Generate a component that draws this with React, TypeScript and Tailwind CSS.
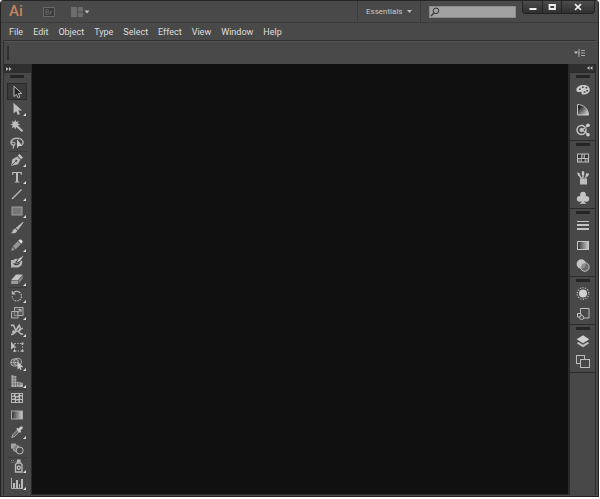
import type { ReactNode } from 'react'

interface Tool {
  name: string
  icon: ReactNode
  flyout?: boolean
  divider?: boolean
}

interface Panel {
  name: string
  icon: ReactNode
}

const MENUS = ['File', 'Edit', 'Object', 'Type', 'Select', 'Effect', 'View', 'Window', 'Help']

const TOOLS: Tool[] = [
  {
    name: 'Selection',
    icon: <path d="M4 1.200v10.300l2.500-2.200 1.700 3.600 1.800-.9-1.700-3.400h3.500z" fill="#222" stroke="#b8b8b8" />,
  },
  {
    name: 'Direct Selection',
    flyout: true,
    icon: <path d="M3.500.8v10.700l2.700-2.300 1.700 3.800 2.100-1-1.700-3.600h3.700z" fill="#bcbcbc" />,
  },
  {
    name: 'Magic Wand',
    icon: (
      <>
        <path d="M5.200.5l1 2.600 2.600-1.100-1.100 2.500 2.600 1-2.600 1 .9 2.300-2.400-.9-1 2.600-1-2.600-2.500 1.100 1.100-2.500-2.400-1 2.400-1-1-2.500 2.400 1.100z" fill="#bcbcbc" />
        <path d="M7.300 7.500l5.200 4.800" stroke="#bcbcbc" strokeWidth="2.200" />
      </>
    ),
  },
  {
    name: 'Lasso',
    icon: (
      <>
        <path d="M4.800 9.500C2.300 9.300 1 8 1 6.200 1 3.800 3.700 2.200 7 2.200s6 1.600 6 4c0 1-.4 1.900-1.200 2.500" fill="none" stroke="#b0b0b0" strokeWidth="1.500" />
        <path d="M1.500 7c1.200-1.500 3.800-.7 3.500.8-.2 1.200-1.800 1-1.500 2.200.2.900.2 1.600-.8 2.500" fill="none" stroke="#b0b0b0" strokeWidth="1.200" />
        <path d="M7 3.200v9l2-2.200h3.500z" fill="#c8c8c8" />
      </>
    ),
  },
  {
    name: 'Pen',
    flyout: true,
    divider: true,
    icon: (
      <>
        <path d="M1.200 12.800l1.200-6.500 4.800-2.800 3.300 3.300-2.800 4.800z" fill="#b8b8b8" />
        <path d="M7.800 2.700l1.600-1.600 3.500 3.500-1.600 1.600z" fill="#c8c8c8" />
        <path d="M2 12l4-4" stroke="#444" strokeWidth=".8" />
        <circle cx="6.300" cy="7.700" r="1" fill="#444" />
      </>
    ),
  },
  {
    name: 'Type',
    flyout: true,
    icon: <path d="M2.200 2h9.600v3h-.8c-.2-1.300-.6-1.900-2-1.900h-1v7.600c0 .7.300.9 1.500 1v.8h-5v-.8c1.200-.1 1.500-.3 1.500-1V3.100H5c-1.400 0-1.800.6-2 1.900h-.8z" fill="#bcbcbc" />,
  },
  {
    name: 'Line Segment',
    flyout: true,
    icon: <path d="M2 12l9.500-9.500" stroke="#bcbcbc" strokeWidth="1.200" />,
  },
  {
    name: 'Rectangle',
    flyout: true,
    icon: <rect x="2" y="3" width="10" height="8" fill="#777" stroke="#a0a0a0" />,
  },
  {
    name: 'Paintbrush',
    icon: (
      <>
        <path d="M13 .8l.5.6-5.500 7.600-2.200-1.900z" fill="#bcbcbc" />
        <path d="M5.200 7.600l2 1.800c-.5 2.500-3 3.300-6.500 2.700 2.300-.6 1.900-3.900 4.500-4.500z" fill="#bcbcbc" />
      </>
    ),
  },
  {
    name: 'Pencil',
    flyout: true,
    icon: (
      <>
        <path d="M1.200 12.800l1-3.700 2.700 2.700zM2.800 8.300l5-5 2.900 2.900-5 5z" fill="#989898" />
        <path d="M8.300 2.800l1-1c1.600-1.300 4.200 1.200 2.900 2.900l-1 1z" fill="#dedede" />
      </>
    ),
  },
  {
    name: 'Blob Brush',
    icon: (
      <>
        <path d="M1 5h2.500L5 3.800h3L5.800 6.500 5 8.800l4-.8 2.500-2.500 1 1-1 4-3.500 2H1z" fill="#b4b4b4" />
        <path d="M13.500.8L9 3.500 6.500 7.500l3.500-1.500z" fill="#c8c8c8" />
        <path d="M4 8c0 2.500 4 2 5.500 0" stroke="#3c3c3c" strokeWidth="1.200" fill="none" />
      </>
    ),
  },
  {
    name: 'Eraser',
    flyout: true,
    icon: (
      <>
        <path d="M1.200 8l4.800-5.500h6.800L8.200 8z" fill="#c2c2c2" />
        <path d="M1.200 8.500H8v3.500H1.200z" fill="#9c9c9c" />
        <path d="M8.500 8.300L12.800 3.300v3.500l-4.300 5z" fill="#808080" />
      </>
    ),
  },
  {
    name: 'Rotate',
    flyout: true,
    divider: true,
    icon: (
      <>
        <path d="M4 3.200a4.800 4.800 0 1 1-.7 7.400" fill="none" stroke="#bcbcbc" strokeWidth="1.200" strokeDasharray="7 1 1.500 1 1.500 1 1.500 1 1.500 1 1.500 1" />
        <path d="M1.800 1.500v4h4z" fill="#bcbcbc" />
        <path d="M2.300 7v1.300M2.800 9.300l.5.900" stroke="#bcbcbc" />
      </>
    ),
  },
  {
    name: 'Scale',
    flyout: true,
    icon: (
      <>
        <rect x="4.500" y="1.500" width="8.500" height="8" fill="#555" stroke="#aaa" />
        <path d="M1.500 5.500H8V12H1.500z" fill="#606060" fillOpacity=".5" stroke="#aaa" />
        <path d="M7.500 6.500l3-2.500M8.500 3.500h2.500v2.500" fill="none" stroke="#c4c4c4" />
      </>
    ),
  },
  {
    name: 'Width',
    flyout: true,
    icon: (
      <>
        <path d="M1 3c1.500-2 3-.5 3.500 1.500S6 7.500 7 5.500 9 2 10 1.500M1 11.500c3.500.7 4-3.500 6.500-3.500s1 4 5.500 3" fill="none" stroke="#b8b8b8" strokeWidth="1.500" />
        <path d="M2.500 10C5 9 8 4 9.500 3.500s.5 3-1 4.500c2.500 0 2-3 4.500-2.500" stroke="#b8b8b8" fill="none" strokeWidth="1.200" />
        <circle cx="3.500" cy="8.700" r="1.500" fill="#b8b8b8" />
      </>
    ),
  },
  {
    name: 'Free Transform',
    icon: (
      <>
        <path d="M1 1.500v8l2.200-1.800h3.300z" fill="#bcbcbc" />
        <path d="M4.500 3.500h8v7.500h-8z" fill="none" stroke="#aaa" strokeDasharray="1.500 1.200" />
        <path d="M11.500 2.500h2v2h-2zM11.500 10h2v2h-2zM3.500 10h2v2h-2z" fill="#bcbcbc" />
      </>
    ),
  },
  {
    name: 'Shape Builder',
    flyout: true,
    icon: (
      <>
        <ellipse cx="4.700" cy="5.500" rx="4" ry="3.800" fill="#666" stroke="#aaa" />
        <ellipse cx="7.700" cy="5" rx="3.800" ry="3.800" fill="none" stroke="#aaa" />
        <path d="M1 5.500h8" stroke="#b8b8b8" strokeDasharray="1 1" />
        <path d="M7.500 4.500v8l1.800-1.600 1 2.200 1.300-.6-1-2.200h2.700z" fill="#c8c8c8" />
      </>
    ),
  },
  {
    name: 'Perspective Grid',
    flyout: true,
    icon: (
      <>
        <path d="M1.500 1l5 1.500v5L13 9v4H1.500z" fill="#b4b4b4" />
        <path d="M4 1v12M6.500 3v10M9 7.500v5.500M2 4l4.500.5M2 7h5M2 10h11" stroke="#555" strokeWidth=".6" />
      </>
    ),
  },
  {
    name: 'Mesh',
    divider: true,
    icon: (
      <>
        <rect x="1.500" y="2.500" width="11" height="9" fill="#4b4b4b" stroke="#b4b4b4" />
        <path d="M2 5.500c3-2 4 2 6 0s3-1 4.500 0M2 8.500c2-1.500 4 1.500 6 0s3 .5 4.500 0M5 2.500c-1.500 3 2 5 .3 9M9 2.500c2 3-1.500 5 .5 9" stroke="#c8c8c8" fill="none" strokeWidth="1.200" />
      </>
    ),
  },
  {
    name: 'Gradient',
    icon: <rect x="1.500" y="3" width="11" height="8" fill="url(#fade)" stroke="#a4a4a4" />,
  },
  {
    name: 'Eyedropper',
    flyout: true,
    icon: (
      <>
        <path d="M1.800 12.500l1-2.800 4.500-4.500 1.800 1.800-4.500 4.500z" fill="#666" stroke="#b4b4b4" strokeWidth=".9" />
        <path d="M6.200 4l1.200-1.200 1.200.8 1.700-1.900c1.500-1.300 3.300.5 2.100 2l-2 1.800.8 1.200L10 7.900z" fill="#c8c8c8" />
      </>
    ),
  },
  {
    name: 'Blend',
    icon: (
      <>
        <rect x="1" y="1.500" width="5" height="5" fill="#a4a4a4" />
        <circle cx="6.300" cy="6.500" r="3.200" fill="#808080" stroke="#a4a4a4" />
        <circle cx="9.700" cy="8.500" r="3.500" fill="#4a4a4a" stroke="#bcbcbc" />
      </>
    ),
  },
  {
    name: 'Symbol Sprayer',
    flyout: true,
    divider: true,
    icon: (
      <>
        <path d="M1 1.500h1M3 1.500h1M1.500 3.500h1M3.500 3.500h1M5.500 2.500h1" stroke="#888" />
        <path d="M7 .5h3.500v3H7z" fill="#bcbcbc" />
        <path d="M5.500 13V5.500L7 4h3.500L12 5.500V13z" fill="#4a4a4a" stroke="#bcbcbc" strokeWidth="1.300" />
        <circle cx="8.700" cy="8.800" r="1.600" fill="none" stroke="#c8c8c8" strokeWidth="1.200" />
      </>
    ),
  },
  {
    name: 'Column Graph',
    flyout: true,
    icon: (
      <>
        <path d="M1.500 2v10.500H13" fill="none" stroke="#b0b0b0" />
        <path d="M3 7h2v5H3zM6 4h2v8H6zM9 8h1v4H9zM11 3h2v9h-2z" fill="#b8b8b8" />
      </>
    ),
  },
]

const PANEL_GROUPS: Panel[][] = [
  [
    {
      name: 'Color',
      icon: (
        <>
          <path d="M7.500 2c3.800 0 6.300 1.900 6.300 4.700s-2.700 4.800-6.300 4.800c-2 0-2.300-.6-1.800-1.500.5-1-1-1.300-2.200-1C1.700 9.300.3 8.500.3 7c0-2.900 3.200-5 7.200-5z" fill="#c8c8c8" />
          <path d="M3 5.500h1.700v1.500H3zM6 3.500h1.700v1.500H6zM9.500 4h1.700v1.500H9.500zM10.300 7h1.700v1.500h-1.700zM7.700 8.300h1.700v1.500H7.700z" fill="#4a4a4a" />
        </>
      ),
    },
    { name: 'Color Guide', icon: <path d="M1.500 1.500c6 0 11 4.500 11 10.500h-11z" fill="url(#guide)" stroke="#c4c4c4" /> },
    {
      name: 'Kuler',
      icon: (
        <>
          <circle cx="5.500" cy="7" r="4.500" fill="none" stroke="#c4c4c4" strokeWidth="1.500" strokeDasharray="24 2" />
          <circle cx="5.500" cy="7" r="2" fill="#c4c4c4" />
          <path d="M6 7l6-4.500M6 7l6 4" stroke="#c4c4c4" strokeWidth="1.200" />
          <circle cx="12" cy="2.200" r="1.800" fill="#d0d0d0" />
          <circle cx="12" cy="11.700" r="1.800" fill="#d0d0d0" />
        </>
      ),
    },
  ],
  [
    {
      name: 'Swatches',
      icon: (
        <>
          <path d="M1 2.500h12v9H1z" fill="#bdbdbd" />
          <path d="M2 3.500h3V7H2zM9 3.500h3V7H9zM5.700 8h3v2.500h-3z" fill="#333" />
          <path d="M5.700 3.500h2.600V7H5.700zM2 8h3v2.500H2zM9.500 8H12v2.500H9.500z" fill="#666" />
        </>
      ),
    },
    {
      name: 'Brushes',
      icon: (
        <>
          <path d="M4 7.500h7V13.500H4z" fill="#bdbdbd" />
          <path d="M5.500 7.500L2.500 3M7 7.500V3M9 7.500l2.300-4" stroke="#bdbdbd" strokeWidth="1.500" />
          <path d="M1 1.500l2.400.6.500 2.400-1.700.3zM5.800.2h2.400v3.800H5.800zM10 2.300l3.300.5-1.700 2.900-2-.9z" fill="#c8c8c8" />
        </>
      ),
    },
    {
      name: 'Symbols',
      icon: (
        <g fill="#c4c4c4">
          <circle cx="7" cy="3.700" r="2.900" />
          <circle cx="3.700" cy="7.800" r="2.900" />
          <circle cx="10.300" cy="7.800" r="2.900" />
          <path d="M6 5h2l.5 6 2 1.700h-7l2-1.700z" />
        </g>
      ),
    },
  ],
  [
    { name: 'Stroke', icon: <path d="M1 2h12v1H1zM1 5h12v2H1zM1 9h12v2H1z" fill="#c4c4c4" /> },
    { name: 'Gradient', icon: <rect x="1.500" y="2.500" width="11" height="8" fill="url(#fade)" stroke="#c4c4c4" /> },
    {
      name: 'Transparency',
      icon: (
        <>
          <circle cx="5.300" cy="5" r="4.700" fill="#c4c4c4" />
          <circle cx="8.800" cy="8" r="4.300" fill="#777" fillOpacity=".7" stroke="#c4c4c4" />
        </>
      ),
    },
  ],
  [
    {
      name: 'Appearance',
      icon: (
        <>
          <circle cx="7" cy="6.500" r="4" fill="#d0d0d0" />
          <circle cx="7" cy="6.500" r="5.800" fill="none" stroke="#bdbdbd" strokeWidth="1.200" strokeDasharray="1.200 1.400" />
        </>
      ),
    },
    {
      name: 'Graphic Styles',
      icon: (
        <>
          <path d="M4.500 6V1.500h8.500v9.500H8" fill="none" stroke="#bdbdbd" />
          <path d="M1.500 6.500h3.500v3.500H1.500z" fill="#4a4a4a" stroke="#c4c4c4" />
          <circle cx="5.700" cy="10.500" r="2" fill="#4a4a4a" stroke="#c4c4c4" />
        </>
      ),
    },
  ],
  [
    {
      name: 'Layers',
      icon: (
        <>
          <path d="M7 .3l6.300 4-6.300 4-6.300-4z" fill="#d0d0d0" />
          <path d="M.7 8.200l1.900-1.200L7 9.800l4.400-2.800 1.900 1.200L7 12.300z" fill="#bdbdbd" />
        </>
      ),
    },
    {
      name: 'Artboards',
      icon: (
        <>
          <rect x=".5" y=".5" width="8" height="8" fill="none" stroke="#bdbdbd" />
          <rect x="4.500" y="4.500" width="9" height="8" fill="#484848" stroke="#bdbdbd" />
        </>
      ),
    },
  ],
]

function Icon({ children }: { children: ReactNode }) {
  return (
    <svg viewBox="0 0 14 14" className="size-3.5" aria-hidden="true">
      {children}
    </svg>
  )
}

function Gradients() {
  return (
    <svg className="absolute size-0" aria-hidden="true">
      <defs>
        <linearGradient id="fade">
          <stop offset="0" stopColor="#333" />
          <stop offset="1" stopColor="#ccc" />
        </linearGradient>
        <linearGradient id="guide" x1="0" y1="0" x2="1" y2="1">
          <stop offset=".2" stopColor="#222" />
          <stop offset=".9" stopColor="#ccc" />
        </linearGradient>
      </defs>
    </svg>
  )
}

function TitleBar() {
  return (
    <header className="flex h-[22px] items-start bg-[#494949] border-t border-[#252525]">
      <div className="flex h-full flex-1 items-center pl-2">
        <span className="w-[34px] text-[15px] leading-none font-medium text-[#c2855c] font-['Roboto',sans-serif]">Ai</span>
        <button aria-label="Go to Bridge" className="mr-4">
          <svg viewBox="0 0 12 10" className="h-2.5 w-3">
            <path d="M.5.500h11v9H.5z" fill="#3c3c3c" stroke="#686868" />
            <path d="M3 2.500v5h1.500q1.300 0 1.300-1.300T4.500 5H3h1.300q1.200 0 1.200-1.200T4.300 2.500zM7.500 4v3.500M7.500 5.200Q8 4.200 9.200 4.300" fill="none" stroke="#666" strokeWidth=".9" />
          </svg>
        </button>
        <button aria-label="Arrange Documents">
          <svg viewBox="0 0 19 10" className="h-2.5 w-[19px]">
            <path d="M0 0h6v10H0zM7 0h5v4.500H7zM7 5.500h5V10H7z" fill="#6c6c6c" />
            <path d="M13.500 3.500h5l-2.500 3z" fill="#bbb" />
          </svg>
        </button>
      </div>
      <label className="relative mr-2 flex h-full items-center border-x border-[#3a3a3a] px-2">
        <select aria-label="Workspace" className="w-[46px] appearance-none bg-transparent text-[8px] leading-3 text-[#c8c8c8] outline-none">
          <option>Essentials</option>
        </select>
        <svg viewBox="0 0 5 3" className="absolute right-2 h-[3px] w-[5px]" aria-hidden="true">
          <path d="M0 0h5L2.500 3z" fill="#bbb" />
        </svg>
      </label>
      <div className="mt-[5px] mr-1.5 flex h-3 w-[87px] items-center border border-[#8a8a8a] bg-[#a2a2a2]">
        <svg viewBox="0 0 10 10" className="size-2.5 shrink-0" aria-hidden="true">
          <circle cx="6" cy="3.800" r="2.800" fill="none" stroke="#333" />
          <path d="M4 6L1 9" stroke="#333" strokeWidth="1.300" />
        </svg>
        <input type="search" aria-label="Search help" className="h-full min-w-0 flex-1 bg-transparent text-[8px] text-[#222] outline-none" />
      </div>
      <div className="mr-[3px] flex h-[13px] divide-x divide-[#222] rounded-b-sm border border-t-0 border-[#222] bg-linear-to-b from-[#4c4c4c] to-[#303030]">
        <button aria-label="Minimize" className="flex w-5 items-center justify-center">
          <svg viewBox="0 0 8 8" className="size-2"><path d="M.5 5h7v2h-7z" fill="#eee" /></svg>
        </button>
        <button aria-label="Maximize" className="flex w-[19px] items-center justify-center">
          <svg viewBox="0 0 8 8" className="size-2"><path d="M1.500 2h5.500v4H1.500z" fill="none" stroke="#eee" strokeWidth="1.800" /></svg>
        </button>
        <button aria-label="Close" className="flex w-8 items-center justify-center">
          <svg viewBox="0 0 8 8" className="size-2"><path d="M1 1.200l6 5.600M7 1.200L1 6.800" stroke="#eee" strokeWidth="1.600" /></svg>
        </button>
      </div>
    </header>
  )
}

function ToolBar() {
  return (
    <aside className="flex w-[29px] flex-col border-x border-l-[#303030] border-r-[#2a2a2a] bg-[#484848]">
      <button aria-label="Collapse tools" className="flex h-[9px] items-center bg-[#2f2f2f] pl-0.5">
        <svg viewBox="0 0 6 4" className="h-1 w-1.5"><path d="M0 0l2.500 2L0 4zM3 0l2.500 2L3 4z" fill="#bbb" /></svg>
      </button>
      <div className="flex h-2.5 justify-center pt-0.5 pr-1 pl-0.5"><span className="h-[3px] w-3.5 bg-[#252525]" /></div>
      <nav className="flex flex-col pr-1 pl-[3px]">
        {TOOLS.map((t, i) => (
          <button
            key={t.name}
            aria-label={t.name}
            className={`relative flex h-[17px] items-center justify-center ${i === 0 ? 'border border-[#2a2a2a] bg-[#3a3a3a]' : ''} ${t.divider ? 'border-t border-[#3c3c3c]' : ''}`}
          >
            <Icon>{t.icon}</Icon>
            {t.flyout && (
              <svg viewBox="0 0 3 3" className="absolute right-px bottom-px size-[3px]"><path d="M3 0v3H0z" fill="#ddd" /></svg>
            )}
          </button>
        ))}
      </nav>
    </aside>
  )
}

function PanelDock() {
  return (
    <aside className="flex w-7 flex-col border-x border-l-2 border-[#2a2a2a] bg-[#484848]">
      <button aria-label="Expand panels" className="flex h-2 items-center justify-end bg-[#2f2f2f] pr-0.5">
        <svg viewBox="0 0 6 4" className="h-1 w-1.5"><path d="M2.500 0L0 2l2.500 2zM5.500 0L3 2l2.500 2z" fill="#bbb" /></svg>
      </button>
      {PANEL_GROUPS.map((group) => (
        <div key={group[0].name} className="flex flex-col border-t border-[#2c2c2c]">
          <div className="flex h-[7px] justify-center pt-0.5"><span className="h-[3px] w-3.5 bg-[#252525]" /></div>
          {group.map((p) => (
            <button key={p.name} aria-label={p.name} className="flex h-5 items-center justify-center">
              <Icon>{p.icon}</Icon>
            </button>
          ))}
        </div>
      ))}
      <div className="flex-1 border-t border-[#2c2c2c]" />
    </aside>
  )
}

export default function App() {
  return (
    <div className="flex h-screen flex-col bg-white pr-px pb-0.5 font-['Roboto',sans-serif]">
      <Gradients />
      <div className="flex flex-1 flex-col overflow-hidden rounded-t border-x border-b border-[#222] bg-[#494949]">
        <TitleBar />
        <nav className="flex h-[18px] items-center gap-2.5 border-t border-[#3c3c3c] pl-2">
          {MENUS.map((m) => (
            <button key={m} className="text-[9px] leading-3 text-[#dedede]">{m}</button>
          ))}
        </nav>
        <div className="mx-0.5 flex h-6 items-center justify-between border-t border-l border-[#303030] px-[3px] shadow-[inset_0_1px_0_#555]">
          <span className="h-3.5 w-0.5 bg-[#303030]" />
          <button aria-label="Control panel menu" className="mr-2">
            <svg viewBox="0 0 11 8" className="h-2 w-[11px]">
              <path d="M0 2.500h4L2 5z" fill="#c4c4c4" />
              <path d="M5 0v8M7 1.500h4M7 4h4M7 6.500h4M4 4h2" stroke="#b4b4b4" strokeWidth=".9" />
            </svg>
          </button>
        </div>
        <div className="mx-0.5 mb-px flex flex-1">
          <ToolBar />
          <main className="flex-1 border-b border-[#2a2a2a] bg-[#101010]" />
          <PanelDock />
        </div>
      </div>
    </div>
  )
}
